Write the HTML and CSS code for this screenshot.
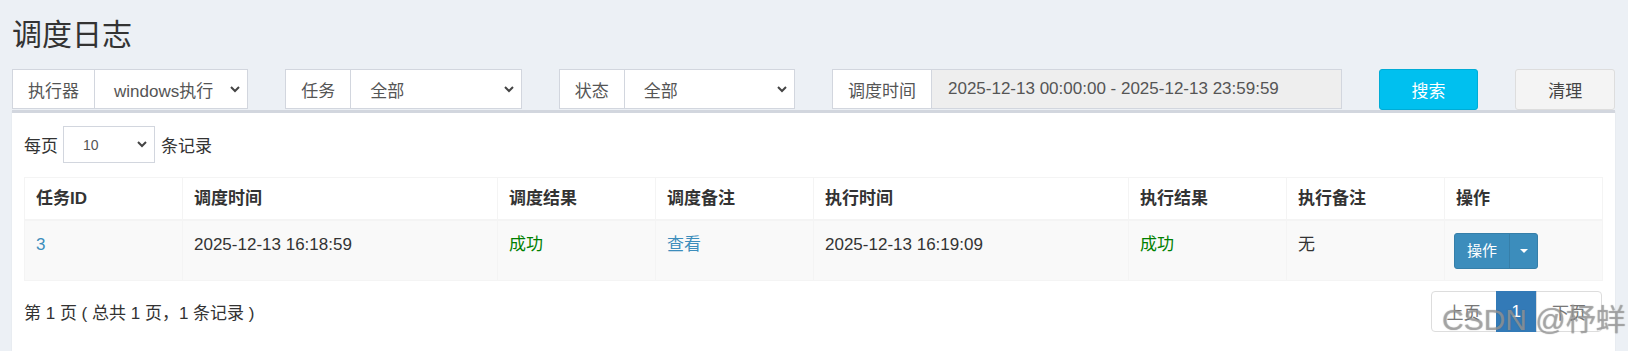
FILE: index.html
```html
<!DOCTYPE html>
<html lang="zh-CN">

<head>
    <meta charset="UTF-8">
    <title>调度日志</title>
    <link rel="stylesheet" href="styles.css">
</head>

<body>
    <section class="content-header">
        <h1>调度日志</h1>
    </section>

    <section class="content">
        <div class="filter-row">
            <div class="input-group span-2">
                <span class="addon">执行器</span>
                <div class="select">
                    <span>windows执行</span>
                    <svg class="chevron" width="10" height="7" viewBox="0 0 10 7"><polyline points="1,1 5,5 9,1" /></svg>
                </div>
            </div>
            <div class="input-group span-2">
                <span class="addon">任务</span>
                <div class="select">
                    <span>全部</span>
                    <svg class="chevron" width="10" height="7" viewBox="0 0 10 7"><polyline points="1,1 5,5 9,1" /></svg>
                </div>
            </div>
            <div class="input-group span-2">
                <span class="addon">状态</span>
                <div class="select">
                    <span>全部</span>
                    <svg class="chevron" width="10" height="7" viewBox="0 0 10 7"><polyline points="1,1 5,5 9,1" /></svg>
                </div>
            </div>
            <div class="input-group span-4">
                <span class="addon">调度时间</span>
                <div class="date-input">2025-12-13 00:00:00 - 2025-12-13 23:59:59</div>
            </div>
            <button class="btn btn-search">搜索</button>
            <button class="btn btn-clear">清理</button>
        </div>

        <div class="box">
            <div class="length-row">
                <span>每页</span>
                <div class="select select-sm">
                    <span>10</span>
                    <svg class="chevron" width="10" height="7" viewBox="0 0 10 7"><polyline points="1,1 5,5 9,1" /></svg>
                </div>
                <span>条记录</span>
            </div>

            <table class="log-table">
                <colgroup>
                    <col class="c-id">
                    <col class="c-wide">
                    <col class="c-narrow">
                    <col class="c-narrow">
                    <col class="c-wide">
                    <col class="c-narrow">
                    <col class="c-narrow">
                    <col class="c-narrow">
                </colgroup>
                <thead>
                    <tr>
                        <th>任务ID</th>
                        <th>调度时间</th>
                        <th>调度结果</th>
                        <th>调度备注</th>
                        <th>执行时间</th>
                        <th>执行结果</th>
                        <th>执行备注</th>
                        <th>操作</th>
                    </tr>
                </thead>
                <tbody>
                    <tr>
                        <td><a class="link">3</a></td>
                        <td>2025-12-13 16:18:59</td>
                        <td><span class="ok">成功</span></td>
                        <td><a class="link">查看</a></td>
                        <td>2025-12-13 16:19:09</td>
                        <td><span class="ok">成功</span></td>
                        <td>无</td>
                        <td>
                            <div class="btn-split">
                                <span class="btn-op">操作</span>
                                <span class="btn-caret"><i class="caret"></i></span>
                            </div>
                        </td>
                    </tr>
                </tbody>
            </table>

            <div class="footer-row">
                <span>第 1 页 ( 总共 1 页，1 条记录 )</span>
                <ul class="pagination">
                    <li>上页</li>
                    <li class="active">1</li>
                    <li>下页</li>
                </ul>
            </div>
        </div>
    </section>

    <div class="watermark">CSDN @杼蛘</div>
</body>

</html>
```
FILE: styles.css
```css
body {
    margin: 0;
    background-color: #ecf0f5;
    font-family: "Liberation Sans", "Noto Sans CJK SC", sans-serif;
    font-size: 17px;
    color: #333;
    overflow: hidden;
}

.content-header {
    padding: 15px 12px 0 12px;
}

.content-header h1 {
    margin: 0;
    font-size: 30px;
    font-weight: normal;
    line-height: 40px;
    color: #333;
}

.content {
    padding: 14px 13px 0 12px;
}

/* filter bar */
.filter-row {
    display: grid;
    grid-template-columns: repeat(12, 1fr);
    column-gap: 37px;
    height: 40px;
}

.span-2 {
    grid-column: span 2;
}

.span-4 {
    grid-column: span 4;
}

.input-group {
    display: flex;
    height: 40px;
}

.addon {
    display: flex;
    align-items: center;
    padding: 0 15px;
    background-color: #fff;
    border: 1px solid #d2d6de;
    color: #555;
    white-space: nowrap;
}

.select {
    flex: 1;
    display: flex;
    align-items: center;
    padding: 0 7px 0 19px;
    background-color: #fff;
    border: 1px solid #d2d6de;
    border-left: none;
    color: #555;
    white-space: nowrap;
}

.chevron {
    margin-left: auto;
    fill: none;
    stroke: #444;
    stroke-width: 2;
}

.date-input {
    flex: 1;
    display: flex;
    align-items: center;
    padding: 0 16px;
    background-color: #eee;
    border: 1px solid #d2d6de;
    border-left: none;
    color: #555;
    white-space: nowrap;
}

.btn {
    height: 41px;
    font-family: inherit;
    font-size: 17px;
    border-radius: 3px;
    padding: 0;
}

.btn-search {
    background-color: #00c0ef;
    border: 1px solid #00acd6;
    color: #fff;
}

.btn-clear {
    background-color: #f4f4f4;
    border: 1px solid #ddd;
    color: #444;
}

/* box */
.box {
    margin-top: 1px;
    background-color: #fff;
    border-top: 3px solid #d2d6de;
    box-shadow: 0 1px 1px rgba(0, 0, 0, 0.1);
    padding: 13px 13px 40px 12px;
}

.length-row {
    display: flex;
    align-items: center;
    height: 37px;
}

.select-sm {
    flex: none;
    box-sizing: border-box;
    width: 92px;
    height: 37px;
    margin: 0 6px 0 5px;
    border-left: 1px solid #d2d6de;
    font-size: 14px;
    color: #555;
}

.log-table {
    width: 100%;
    margin-top: 14px;
    table-layout: fixed;
    border-collapse: collapse;
    border: 1px solid #f4f4f4;
}

.c-id {
    width: 158px;
}

.c-wide {
    width: 315px;
}

.c-narrow {
    width: 158px;
}

.log-table th,
.log-table td {
    text-align: left;
    line-height: 24px;
    border: 1px solid #f4f4f4;
    vertical-align: top;
}

.log-table th {
    padding: 9px 11px 8px 11px;
    border-bottom-width: 2px;
    font-weight: bold;
}

.log-table td {
    padding: 12px 11px 11px 11px;
    background-color: #f9f9f9;
}

.link {
    color: #3c8dbc;
}

.ok {
    color: #008000;
}

.btn-split {
    display: flex;
    width: max-content;
    height: 36px;
    margin-left: -2px;
    border: 1px solid #367fa9;
    border-radius: 3px;
    background-color: #3c8dbc;
    color: #fff;
    font-size: 15px;
    box-sizing: border-box;
}

.btn-op {
    display: flex;
    align-items: center;
    padding: 0 12px;
    border-right: 1px solid #367fa9;
}

.btn-caret {
    display: flex;
    align-items: center;
    justify-content: center;
    width: 27px;
}

.caret {
    width: 0;
    height: 0;
    border-top: 4px solid #fff;
    border-left: 4px solid transparent;
    border-right: 4px solid transparent;
}

.footer-row {
    display: flex;
    align-items: center;
    justify-content: space-between;
    margin-top: 10px;
}

.pagination {
    display: flex;
    margin: 0;
    padding: 0;
    list-style: none;
}

.pagination li {
    display: flex;
    align-items: center;
    height: 39px;
    padding: 0 15px;
    border: 1px solid #ddd;
    margin-left: -1px;
    color: #777;
}

.pagination li:first-child {
    border-radius: 4px 0 0 4px;
}

.pagination li:last-child {
    border-radius: 0 4px 4px 0;
}

.pagination li.active {
    background-color: #337ab7;
    border-color: #337ab7;
    color: #fff;
}

.watermark {
    position: absolute;
    left: 1442px;
    top: 305px;
    font-size: 30px;
    line-height: 30px;
    color: rgba(170, 170, 170, 0.6);
    text-shadow: 0 0 1px rgba(80, 80, 80, 0.6);
    white-space: nowrap;
}
```
